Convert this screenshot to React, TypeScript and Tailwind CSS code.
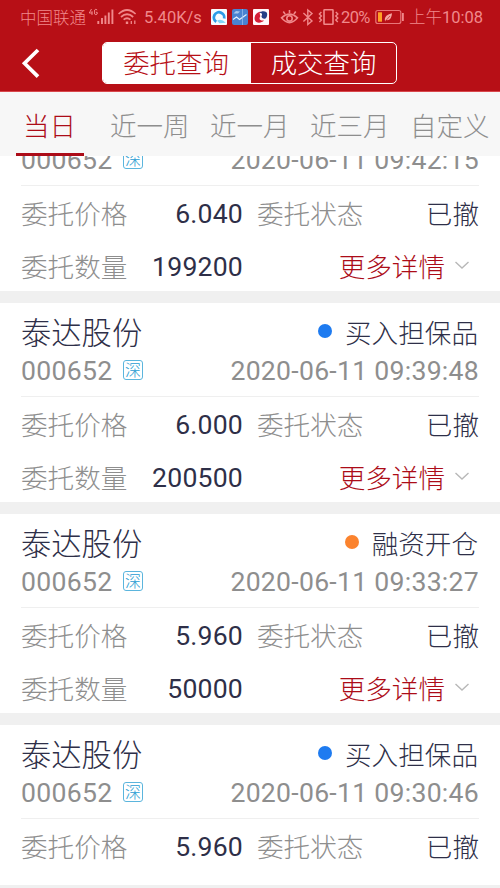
import React from 'react';

type Order = {
  time: string;
  price: string;
  amount: string;
  kind: string;
  dot: string;
};

const orders: Order[] = [
  { time: '2020-06-11 09:42:15', price: '6.040', amount: '199200', kind: '买入担保品', dot: 'bg-[#1e7bf0]' },
  { time: '2020-06-11 09:39:48', price: '6.000', amount: '200500', kind: '买入担保品', dot: 'bg-[#1e7bf0]' },
  { time: '2020-06-11 09:33:27', price: '5.960', amount: '50000', kind: '融资开仓', dot: 'bg-[#fb832e]' },
  { time: '2020-06-11 09:30:46', price: '5.960', amount: '50000', kind: '买入担保品', dot: 'bg-[#1e7bf0]' },
];

function StatusBar() {
  return (
    <div className="flex h-[35px] items-center whitespace-nowrap pl-[20px] text-[16.5px] leading-[35px] text-[#f0898b]">
      <span className="w-[68px] pt-px">中国联通</span>
      <svg className="h-[35px] w-[50px] shrink-0" viewBox="88 0 50 35" fill="none" stroke="currentColor">
        <path d="M91.5 9 L89.3 13 H92.5 M92 11.2 V15 M97.2 10 Q95.7 8.6 94.6 10 V14 Q95.7 15.4 97.2 14 V12.3 H96" strokeWidth="1" />
        <path d="M98.3 21v3M102 18v6M105.4 15.5v8.5M108.8 12.5v11.5M112.4 9.5v14.5" strokeWidth="1.9" />
        <path d="M118.6 14 Q127 6 135.6 14M121 17 Q127 11.5 133.2 17M123.6 19.7 Q127 16.8 130.5 19.7" strokeWidth="1.7" />
        <path d="M127 21.5v2.5" strokeWidth="2.4" />
        <path d="M131.3 21v3M134.8 20.5v3.5" strokeWidth="1.3" />
      </svg>
      <span className="ml-[6px] w-[67px] font-normal">5.40K/s</span>
      <svg className="h-[35px] w-[130px] shrink-0" viewBox="211 0 130 35" fill="none">
        <rect x="211" y="9" width="16" height="16" rx="1" fill="#f7fbff" />
        <path d="M216.2 21.8 A5.2 5.2 0 1 1 224.2 18.5" stroke="#2d9be8" strokeWidth="2.8" />
        <path d="M217 20.8 Q221 18 225.8 22.8 L219.5 23.2Z" fill="#7fd6f8" />
        <rect x="232" y="9" width="16" height="16" rx="2" fill="#4a83d2" />
        <path d="M233.5 13.5 L236 11 L240 11.5 L238 13.5Z" fill="#a9c9ef" />
        <path d="M233 19.5 L236.5 17 L239.5 19.5 L246.5 14.5" stroke="#e6f2ff" strokeWidth="1.1" />
        <path d="M242.5 9v16" stroke="#9cc1ef" strokeWidth=".7" />
        <rect x="253" y="9" width="16" height="16" rx="1" fill="#fff8fa" />
        <path d="M267.2 14.5 C267.5 10.8 262 10.3 259 12.8 C261.5 12.8 263 14 261.5 16 C261 18 264 19.5 265.5 18.5 C266.7 17.5 267.2 16 267.2 14.5Z" fill="#253f86" />
        <path d="M260.5 11.5 C256 12.5 253.8 16.5 254.8 20 C256 23.6 261.5 23.3 264 20.5 C261 21 258.5 19.8 260 17 C261 15.3 258.5 14 260.5 11.5Z" fill="#d51e36" />
        <g stroke="#f0898b" strokeWidth="1.6">
          <path d="M281.5 17.8 Q289.5 10.5 297.5 17.8 Q289.5 27.5 281.5 17.8Z" />
          <circle cx="289.5" cy="18.4" r="2.7" />
          <path d="M289.5 10v3M283.3 11.5l1.8 2.6M295.7 11.5l-1.8 2.6" />
          <path d="M303.4 13 L312 21 L307.8 24.5 V10 L312 13.5 L303.4 21.5" strokeWidth="1.4" />
          <rect x="324" y="9.8" width="9" height="14.4" rx=".5" />
          <path d="M321.4 12l-2 2 2 2-2 2 2 2-2 2M335.8 12l2 2-2 2 2 2-2 2 2 2" strokeWidth="1.4" />
        </g>
      </svg>
      <span className="w-[34px] font-normal tracking-[-0.6px]">20%</span>
      <svg className="h-[35px] w-[34px] shrink-0" viewBox="375 0 34 35" fill="none">
        <rect x="375.8" y="10.5" width="25" height="13" rx="2" stroke="#e87578" strokeWidth="1.2" />
        <rect x="378" y="12.3" width="4" height="9.4" fill="#ffa126" />
        <path d="M385.2 21.5 C383.5 16.5 388 14 392 13.2 C391.5 18.5 389.5 20.7 386.3 20Z" fill="#f4a5a0" />
        <path d="M385 21.5l5-5.5" stroke="#b90f16" strokeWidth=".6" />
        <rect x="402" y="13" width="1.8" height="8" fill="#f0898b" />
      </svg>
      <span>上午<span className="font-normal">10:08</span></span>
    </div>
  );
}

function NavBar() {
  return (
    <div className="flex h-[56px] items-center">
      <svg className="ml-[19px] mt-[-1px] h-[32px] w-[24px]" viewBox="20 46 24 32" fill="none" stroke="#fff" strokeWidth="3.7">
        <path d="M39 49 L25.5 62.3 L39 75.6" />
      </svg>
      <div className="ml-[59px] mt-[-1px] flex h-[42px] w-[295px] overflow-hidden rounded-[5px] border-[1.5px] border-white text-[26.4px] leading-[42px]">
        <div className="w-[148px] bg-white pr-[2px] text-center text-[#b70f16]">委托查询</div>
        <div className="flex-1 text-center text-white">成交查询</div>
      </div>
    </div>
  );
}

function Tabs() {
  return (
    <div className="flex h-[65px] shrink-0 whitespace-nowrap border-t border-[#d9474c] bg-[#f7f7f7] pt-[15px] text-[26.5px] leading-[40px] text-[#8e8e8e]">
      <div className="ml-[16px] h-[49px] w-[68px] border-b-[3px] border-[#ac0c18] pr-px text-center text-[#ac0c18]">当日</div>
      <div className="ml-[26px] w-[80px]">近一周</div>
      <div className="ml-[20px] w-[80px]">近一月</div>
      <div className="ml-[20px] w-[80px]">近三月</div>
      <div className="ml-[20px] w-[80px]">自定义</div>
    </div>
  );
}

function OrderCard({ order }: { order: Order }) {
  return (
    <div className="mb-[12px] h-[199px] bg-white px-[21px] text-[26.6px] text-[#8e8e8e]">
      <div className="flex h-[54px] items-center justify-between pt-[8px] text-[#2e2f48]">
        <span className="text-[30.3px] leading-[40px]">泰达股份</span>
        <span className="flex items-center pr-px leading-[40px]">
          <i className={`mr-[13px] mt-[-6px] h-[14px] w-[14px] rounded-full ${order.dot}`} />
          {order.kind}
        </span>
      </div>
      <div className="flex h-[39px] items-center justify-between pb-[11px] leading-[28px]">
        <span className="flex items-center">
          <span className="w-[102px] font-normal tracking-[0.3px]">000652</span>
          <span className="mt-[-2px] flex h-[20px] w-[20px] items-center justify-center rounded-[3px] border border-[#5bb5dd] pt-[2px] text-[16px] leading-[18px] text-[#2a9cd2]">深</span>
        </span>
        <span className="font-normal tracking-[0.27px]">{order.time}</span>
      </div>
      <div className="flex h-[57px] items-center border-t border-[#efefef]">
        <span className="w-[108px] pt-[2px]">委托价格</span>
        <span className="w-[114px] text-right font-normal tracking-[0.2px] text-[#2e2f48]">{order.price}</span>
        <span className="ml-[14px] pt-[2px]">委托状态</span>
        <span className="ml-auto pt-[2px] text-[#2e2f48]">已撤</span>
      </div>
      <div className="flex h-[49px] items-center">
        <span className="w-[108px] pt-[2px]">委托数量</span>
        <span className="w-[114px] text-right font-normal tracking-[0.2px] text-[#2e2f48]">{order.amount}</span>
        <span className="ml-auto pt-[2px] text-[#ac0c18]">更多详情</span>
        <svg className="ml-[9px] mr-[9px] mt-[-4px] h-[10px] w-[16px]" viewBox="0 0 16 10" fill="none" stroke="#b8b8b8" strokeWidth="1.4">
          <path d="M1.5 2 L8 8 L14.5 2" />
        </svg>
      </div>
    </div>
  );
}

export default function App() {
  return (
    <div className="flex h-[888px] w-[500px] flex-col overflow-hidden bg-[#f0f0f0] font-['Roboto','Noto_Sans_CJK_SC',sans-serif] font-light">
      <header className="h-[91px] shrink-0 bg-[#b70f16]">
        <StatusBar />
        <NavBar />
      </header>
      <Tabs />
      <main className="h-[729px] shrink-0 overflow-hidden">
        <div className="mt-[-64px]">
          {orders.map((order) => (
            <OrderCard key={order.time} order={order} />
          ))}
        </div>
      </main>
    </div>
  );
}
